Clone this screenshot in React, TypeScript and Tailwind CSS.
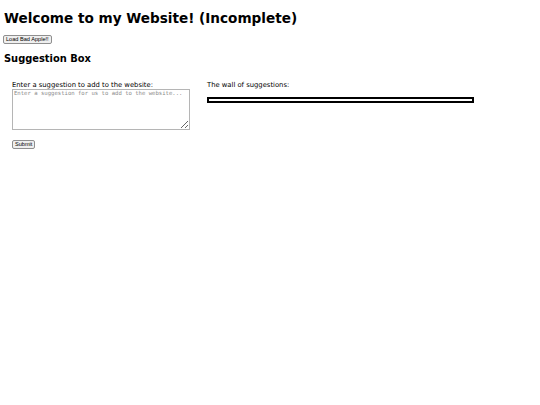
import React from 'react';

const App = () => {
  return (
    <div className="min-h-[405px] bg-white px-[4px] pt-[4px] text-black">
      <h1 className="mt-[5px] mb-[8px] font-['DejaVu_Sans',sans-serif] text-[13.6px] leading-[18px] font-bold">
        Welcome to my Website! (Incomplete)
      </h1>
      <button className="ml-[-1px] block rounded-[2px] border border-[#8f8f8f] bg-[#efefef] px-[2px] font-['Liberation_Sans',sans-serif] text-[5.6px] leading-[7px]">
        Load Bad Apple!!
      </button>
      <h2 className="mt-[8px] font-['DejaVu_Sans',sans-serif] text-[9.9px] leading-[13px] font-bold">Suggestion Box</h2>

      <div className="mt-[17px] flex gap-[17px] pl-[8px] font-['DejaVu_Sans',sans-serif] text-[6.8px]">
        <div className="flex w-[178px] flex-col">
          <label className="leading-[7px]">Enter a suggestion to add to the website:</label>
          <textarea
            placeholder="Enter a suggestion for us to add to the website..."
            className="h-[41px] w-[178px] resize border border-[#b5b5b5] px-[1px] font-['DejaVu_Sans_Mono',monospace] text-[5.6px] leading-[7px] placeholder:text-[#8a8a8a]"
          />
          <div className="mt-[9px]">
            <button className="rounded-[2px] border border-[#8f8f8f] bg-[#efefef] px-[2px] font-['Liberation_Sans',sans-serif] text-[5.6px] leading-[7px]">
              Submit
            </button>
          </div>
        </div>
        <div className="flex flex-col">
          <p className="leading-[7px]">The wall of suggestions:</p>
          <div className="mt-[8px] h-[6px] w-[267px] border-2 border-black bg-white" />
        </div>
      </div>
    </div>
  );
};

export default App;
